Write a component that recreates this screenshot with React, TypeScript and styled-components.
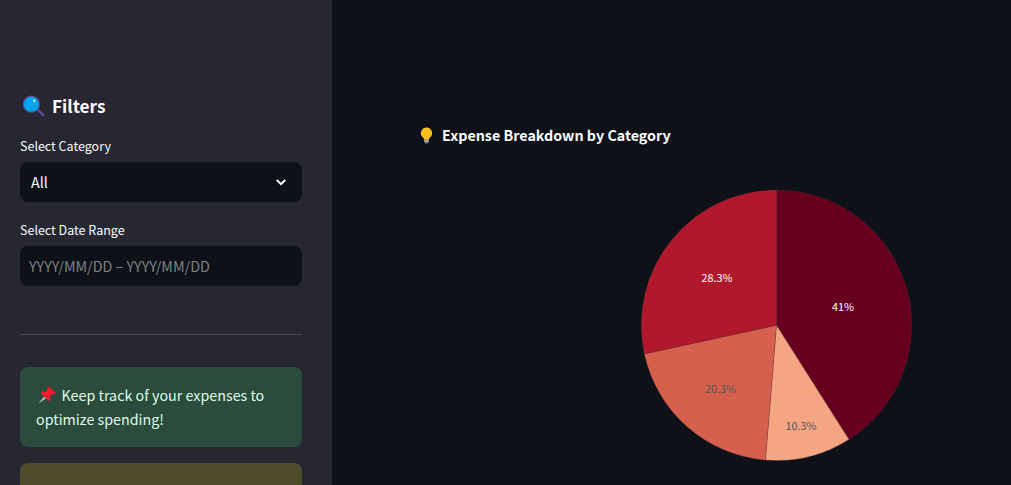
import React from "react";
import styled, { createGlobalStyle } from "styled-components";

const Global = createGlobalStyle`
  html, body { margin: 0; padding: 0; height: 485px; overflow: hidden; background: #0e1117; }
  #root { height: 485px; overflow: hidden; }
  * { box-sizing: border-box; }
`;

const Page = styled.div`
  display: flex;
  height: 485px;
  overflow: hidden;
  background: #0e1117;
  font-family: "Noto Sans CJK SC", "Noto Sans", sans-serif;
  color: #fafafa;
`;

const Sidebar = styled.aside`
  flex: 0 0 332px;
  height: 485px;
  overflow: hidden;
  background: #262730;
  padding: 92px 30px 0 20px;
  display: flex;
  flex-direction: column;
`;

const Heading = styled.h2`
  flex: none;
  margin: 0 0 16px;
  display: flex;
  align-items: center;
  gap: 7px;
  padding-left: 2px;
  height: 28px;
  font-size: 17.2px;
  line-height: 28px;
  font-weight: 700;
`;

const FieldLabel = styled.label`
  display: block;
  font-size: 12.5px;
  line-height: 20px;
  margin-bottom: 6px;
`;

const Field = styled.div`
  flex: none;
  margin-bottom: 18px;
`;

const Control = styled.div`
  height: 40px;
  border-radius: 8px;
  background: #0e1117;
  display: flex;
  align-items: center;
  justify-content: space-between;
`;

const SelectValue = styled.span`
  padding-left: 11px;
  font-size: 14.4px;
  line-height: 24px;
`;

const Chevron = styled.svg`
  width: 16px;
  height: 16px;
  margin-right: 13px;
`;

const Placeholder = styled.span`
  padding-left: 9px;
  font-size: 14.3px;
  line-height: 24px;
  color: #808186;
`;

const Divider = styled.hr`
  flex: 0 0 1px;
  border: 0;
  height: 1px;
  background: #4d4e56;
  margin: 30px 0 32px;
`;

const Alert = styled.div<{ $bg: string; $fg: string; $h: number }>`
  flex: 0 0 ${(p) => p.$h}px;
  border-radius: 8px;
  background: ${(p) => p.$bg};
  color: ${(p) => p.$fg};
  padding: 16px;
  margin-bottom: 16px;
  font-size: 14.3px;
  line-height: 24px;
`;

const PinIcon = styled.svg`
  width: 18px;
  height: 18px;
  margin: 0 5.5px 0 2px;
  vertical-align: -3px;
`;

const Main = styled.main`
  flex: 1;
  min-width: 0;
  padding: 123px 0 0 87px;
`;

const ChartTitle = styled.h3`
  margin: 0;
  display: flex;
  align-items: center;
  gap: 8px;
  height: 24px;
  font-size: 14.3px;
  line-height: 24px;
  font-weight: 700;
`;

const PieChart = styled.svg`
  display: block;
  width: 300px;
  height: 300px;
  margin: 30px 0 0 207px;
`;

const SliceLabel = styled.text<{ $fill: string }>`
  font-family: "Noto Sans CJK SC", "Noto Sans", sans-serif;
  font-size: 10.8px;
  text-anchor: middle;
  fill: ${(p) => p.$fill};
`;

const slices = [
  { pct: 41, color: "#67001f" },
  { pct: 10.3, color: "#f4a582" },
  { pct: 20.3, color: "#d6604d" },
  { pct: 28.4, color: "#b2182b" },
];

const CX = 150.5;
const CY = 148.3;
const R = 135.2;

function arcs() {
  let a = 0;
  return slices.map((s) => {
    const start = a;
    a += (s.pct / 100) * Math.PI * 2;
    const x0 = CX + R * Math.sin(start);
    const y0 = CY - R * Math.cos(start);
    const x1 = CX + R * Math.sin(a);
    const y1 = CY - R * Math.cos(a);
    const large = a - start > Math.PI ? 1 : 0;
    return {
      color: s.color,
      d: `M${CX} ${CY}L${x0.toFixed(2)} ${y0.toFixed(2)}A${R} ${R} 0 ${large} 1 ${x1.toFixed(2)} ${y1.toFixed(2)}Z`,
    };
  });
}

const labels = [
  { t: "41%", x: 217, y: 134, c: "#ffffff" },
  { t: "10.3%", x: 175, y: 253, c: "#555555" },
  { t: "20.3%", x: 94.5, y: 216, c: "#555555" },
  { t: "28.3%", x: 91, y: 105, c: "#ffffff" },
];

export default function App() {
  return (
    <Page>
      <Global />
      <Sidebar>
        <Heading>
          <svg width="23" height="22" viewBox="0 0 24 23" aria-hidden="true">
            <path d="M14.5 15.5l2.2-1.8 6.4 6.4c.6.6.5 1.4 0 1.9-.6.5-1.4.5-1.9 0z" fill="#5c4a94" />
            <circle cx="9.8" cy="9.6" r="9" fill="#5c4a94" />
            <circle cx="9.8" cy="9.6" r="7.8" fill="#04a4ee" />
            <circle cx="12.8" cy="6" r="1.3" fill="#cdeefd" />
          </svg>
          Filters
        </Heading>
        <Field>
          <FieldLabel>Select Category</FieldLabel>
          <Control>
            <SelectValue>All</SelectValue>
            <Chevron viewBox="0 0 16 16" fill="none" aria-hidden="true">
              <path d="M3.8 6l4.2 4.2L12.2 6" stroke="#fafafa" strokeWidth="2" />
            </Chevron>
          </Control>
        </Field>
        <Field>
          <FieldLabel>Select Date Range</FieldLabel>
          <Control>
            <Placeholder>YYYY/MM/DD – YYYY/MM/DD</Placeholder>
          </Control>
        </Field>
        <Divider />
        <Alert $bg="#2b4b3c" $fg="#dffde9" $h={80}>
          <PinIcon viewBox="0 0 18 18" aria-hidden="true">
            <path d="M.4 17.6l5.6-7 2 2z" fill="#b4b8bb" />
            <path d="M10.8.4l6.8 6.6-1.5 1.6-1.4-.5-2.8 2.7.6 2.9-1.6 1.6-8.2-8.2 1.6-1.6 2.9.6 2.7-2.8-.6-1.3z" fill="#ed1c2e" />
          </PinIcon>
          Keep track of your expenses to optimize spending!
        </Alert>
        <Alert $bg="#504b2a" $fg="#ffffc2" $h={80} />
      </Sidebar>
      <Main>
        <ChartTitle>
          <svg width="15" height="17" viewBox="0 0 16 18" aria-hidden="true">
            <path d="M8 .5a6 6 0 0 0-3.7 10.7c.7.6 1 1.3 1 2.3h5.4c0-1 .3-1.7 1-2.3A6 6 0 0 0 8 .5z" fill="#fcc21b" />
            <rect x="5.4" y="13.5" width="5.2" height="3" rx="1" fill="#a8a8a8" />
            <rect x="6.4" y="16.2" width="3.2" height="1.3" rx=".6" fill="#777" />
          </svg>
          Expense Breakdown by Category
        </ChartTitle>
        <PieChart viewBox="0 0 300 300" role="img" aria-label="Pie chart">
          {arcs().map((a) => (
            <path key={a.color} d={a.d} fill={a.color} stroke="#6b3a40" strokeWidth="0.3" />
          ))}
          {labels.map((l) => (
            <SliceLabel key={l.t} x={l.x} y={l.y} $fill={l.c}>
              {l.t}
            </SliceLabel>
          ))}
        </PieChart>
      </Main>
    </Page>
  );
}
